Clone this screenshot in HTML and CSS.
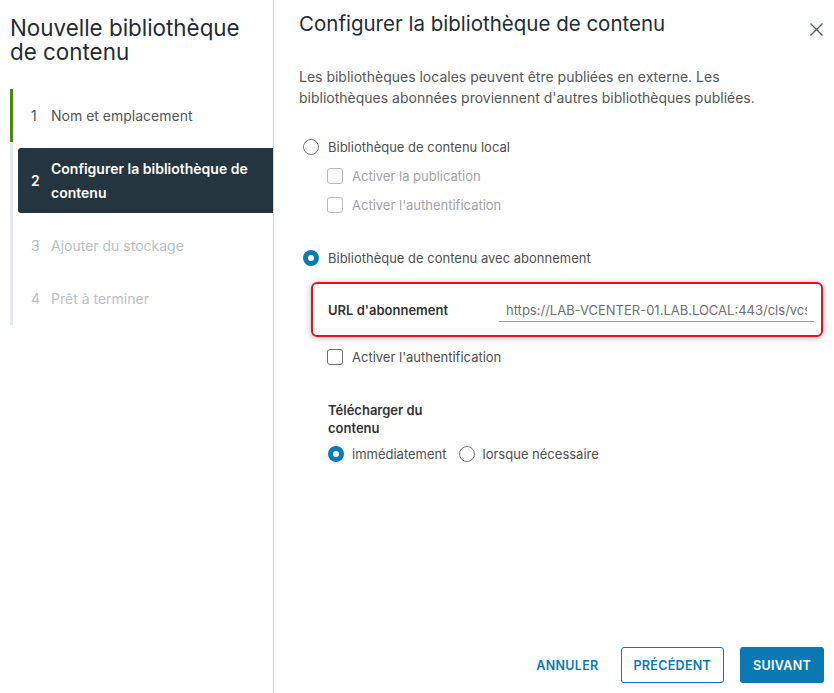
FILE: index.html
```html
<!DOCTYPE html>
<html lang="fr">
<head>
<meta charset="utf-8">
<title>Nouvelle bibliothèque de contenu</title>
<link rel="stylesheet" href="styles.css">
</head>
<body>
<div class="wizard">
  <aside class="sidebar">
    <h1 class="wiz-title">Nouvelle bibliothèque de contenu</h1>
    <ol class="steps">
      <li class="step done"><span class="num">1</span><span class="name">Nom et emplacement</span></li>
      <li class="step active"><span class="num">2</span><span class="name">Configurer la bibliothèque de contenu</span></li>
      <li class="step disabled"><span class="num">3</span><span class="name">Ajouter du stockage</span></li>
      <li class="step disabled"><span class="num">4</span><span class="name">Prêt à terminer</span></li>
    </ol>
  </aside>
  <main class="content">
    <header class="content-head">
      <h2 class="page-title">Configurer la bibliothèque de contenu</h2>
      <button class="close" aria-label="Fermer">
        <svg width="13" height="13" viewBox="0 0 13 13"><path d="M0.5 0.5L12.5 12.5M12.5 0.5L0.5 12.5" stroke="#4a5a63" stroke-width="1.3" fill="none"/></svg>
      </button>
    </header>
    <p class="intro">Les bibliothèques locales peuvent être publiées en externe. Les bibliothèques abonnées proviennent d'autres bibliothèques publiées.</p>

    <label class="radio-row first"><span class="radio"></span><span class="lbl">Bibliothèque de contenu local</span></label>
    <label class="check-row disabled c1"><span class="check"></span><span class="lbl">Activer la publication</span></label>
    <label class="check-row disabled c2"><span class="check"></span><span class="lbl">Activer l'authentification</span></label>

    <label class="radio-row second"><span class="radio on"></span><span class="lbl">Bibliothèque de contenu avec abonnement</span></label>

    <div class="url-box">
      <label class="url-label" for="url">URL d'abonnement</label>
      <input class="url-input" id="url" type="text" readonly value="https://LAB-VCENTER-01.LAB.LOCAL:443/cls/vcsp/lib/">
    </div>

    <label class="check-row c3"><span class="check"></span><span class="lbl">Activer l'authentification</span></label>

    <div class="dl-title">Télécharger du<br>contenu</div>
    <div class="dl-options">
      <label class="radio-inline"><span class="radio on"></span><span class="lbl">immédiatement</span></label>
      <label class="radio-inline"><span class="radio"></span><span class="lbl">lorsque nécessaire</span></label>
    </div>

    <footer class="footer">
      <button class="btn btn-flat">Annuler</button>
      <button class="btn btn-outline">Précédent</button>
      <button class="btn btn-primary">Suivant</button>
    </footer>
  </main>
</div>
</body>
</html>
```
FILE: styles.css
```css
* { box-sizing: border-box; }
html, body { margin: 0; padding: 0; background: #fff; }
body {
  font-family: "Inter", "Noto Sans", sans-serif;
  color: #565656;
  width: 834px;
  height: 693px;
  overflow: hidden;
}
.wizard { display: flex; height: 693px; }

/* sidebar */
.sidebar {
  width: 274px;
  flex: none;
  border-right: 1px solid #cfd3d6;
  padding-top: 16px;
}
.wiz-title {
  margin: 0 0 25px 10px;
  font-size: 22.4px;
  font-weight: 400;
  line-height: 24px;
  color: #1f2d35;
  width: 250px;
}
.steps {
  list-style: none;
  margin: 0 0 0 10px;
  padding: 0;
  border-left: 3px solid #e6edf1;
}
.step {
  display: flex;
  align-items: center;
  height: 53px;
  padding-left: 18px;
  font-size: 14px;
  line-height: 24px;
  color: #565656;
}
.step .num { width: 20px; flex: none; }
.step.done { margin-left: -3px; border-left: 3px solid #4a8a10; padding-left: 18px; }
.step.active {
  height: 65px;
  margin: 6px 0 6px 5px;
  padding-left: 13px;
  background: #24353f;
  color: #fff;
  font-weight: 600;
  border-radius: 3px 0 0 3px;
}
.step.active .name { width: 215px; }
.step.disabled { color: #b9bfc3; }

/* content */
.content {
  flex: 1;
  display: flex;
  flex-direction: column;
  padding: 10px 10px 10px 25px;
  min-width: 0;
}
.content-head { display: flex; justify-content: space-between; align-items: flex-start; }
.page-title {
  margin: 0;
  font-size: 20.5px;
  font-weight: 400;
  line-height: 28px;
  color: #1f2d35;
}
.close {
  border: 0; background: none; padding: 0;
  width: 13px; height: 13px;
  margin: 13px 1px 0 0;
  display: flex;
}
.intro {
  margin: 28px 0 0;
  font-size: 14px;
  line-height: 21px;
  color: #565656;
  width: 470px;
}
.lbl { font-size: 13px; color: #4f4f4f; }

.radio-row, .check-row { display: flex; align-items: center; height: 24px; }
.radio-row.first { margin-top: 27px; }
.radio-row.second { margin-top: 29px; }
.radio-row { padding-left: 4px; }
.radio {
  width: 16px; height: 16px; flex: none;
  border-radius: 50%;
  border: 1px solid #7c7c7c;
  background: #fff;
  margin-right: 9px;
}
.radio.on { border: 5px solid #0a7bb5; }
.check-row { padding-left: 28px; }
.check-row.c1, .check-row.c2 { margin-top: 5px; }
.check-row.c3 { margin-top: 8px; }
.check {
  width: 16px; height: 16px; flex: none;
  border: 1px solid #6e6e6e;
  border-radius: 3px;
  margin-right: 9px;
}
.check-row.disabled .check { border-color: #b7bcc0; }
.check-row.disabled .lbl { color: #a1a4a7; }

.url-box {
  margin: 12px 1px 0 12px;
  height: 55px;
  border: 2px solid #e3121b;
  border-radius: 6px;
  box-shadow: 0 1px 7px rgba(0,0,0,0.28);
  display: flex;
  align-items: center;
  padding: 0 7px 0 15px;
}
.url-label {
  width: 171px; flex: none;
  font-size: 13px; font-weight: 600; color: #333;
}
.url-input {
  flex: 1; min-width: 0;
  height: 24px;
  border: 0;
  border-bottom: 1px solid #9a9a9a;
  padding: 0 7px;
  font-family: inherit;
  font-size: 13px;
  line-height: 23px;
  color: #707070;
  background: transparent;
  outline: none;
  margin-top: 1px;
}

.dl-title {
  margin: 32px 0 0 29px;
  font-size: 13px;
  font-weight: 600;
  line-height: 18px;
  color: #333;
}
.dl-options { display: flex; align-items: center; height: 24px; margin: 5px 0 0 29px; }
.radio-inline { display: flex; align-items: center; margin-right: 12px; }
.radio-inline .radio { margin-right: 8px; }

.footer {
  margin-top: auto;
  display: flex;
  justify-content: flex-end;
  gap: 8px;
}
.btn {
  height: 36px;
  padding: 0 12px;
  font-family: inherit;
  font-size: 12.5px;
  font-weight: 600;
  letter-spacing: 0.3px;
  text-transform: uppercase;
  border-radius: 3px;
  border: 1px solid transparent;
  background: none;
  color: #0a79b3;
}
.btn-flat { padding: 0 13px; }
.btn-outline { border-color: #0a79b3; padding: 0 12px; }
.btn-primary { background: #0a79b3; color: #fff; margin-left: 8px; }
```
